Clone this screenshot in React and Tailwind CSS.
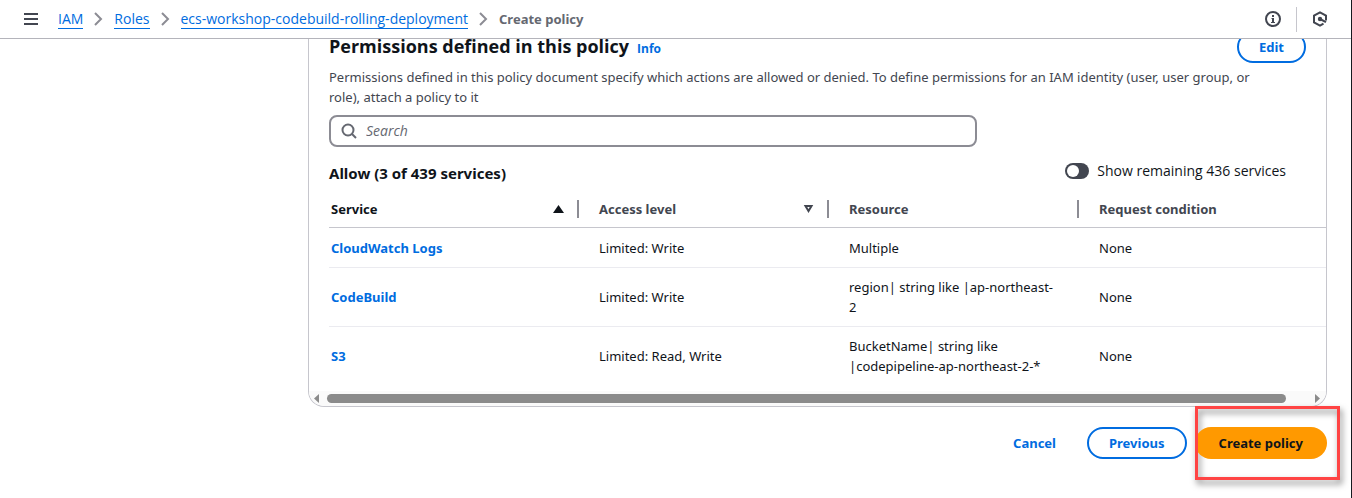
import React from "react";

const rows = [
  { service: "CloudWatch Logs", access: "Limited: Write", resource: "Multiple", condition: "None" },
  { service: "CodeBuild", access: "Limited: Write", resource: "region| string like |ap-northeast-2", condition: "None" },
  { service: "S3", access: "Limited: Read, Write", resource: "BucketName| string like |codepipeline-ap-northeast-2-*", condition: "None" },
];

// Body copy in the panel, and its bold form for headings, links and buttons.
const body = "font-['Noto_Sans','Open_Sans',sans-serif] text-[13px] leading-5";
const strong = `${body} font-bold`;

function Chevron() {
  return (
    <svg className="size-4 shrink-0" viewBox="0 0 16 16" fill="none" stroke="#8c8c94" strokeWidth="2" aria-hidden="true">
      <path d="M5 2l6 6-6 6" />
    </svg>
  );
}

function Crumb({ children }) {
  return (
    <li className="flex items-center gap-[7px]">
      <a href="#" className="border-b border-[#006ce0] leading-[18px] text-[#006ce0]">{children}</a>
      <Chevron />
    </li>
  );
}

function HeaderCell({ children, first, active, icon, divider = true }) {
  return (
    <th scope="col" className={`h-[38px] border-b border-[#c6c6cd] p-0 ${strong} ${active ? "text-[#0f141a]" : "text-[#424650]"}`}>
      <div className={`flex h-[18px] items-center justify-between ${first ? "pl-0.5" : "pl-5"} ${divider ? "border-r-2 border-[#8c8c94]" : ""}`}>
        <span>{children}</span>
        {icon && <button type="button" aria-label="Sort" className="mr-[13px]">{icon}</button>}
      </div>
    </th>
  );
}

function Cell({ children, first }) {
  return (
    <td className={`h-10 border-b border-[#ebebf0] py-[9px] pr-5 group-last:border-transparent ${body} ${first ? "pl-0.5" : "pl-5"}`}>
      {children}
    </td>
  );
}

export default function App() {
  return (
    <div className="flex min-h-screen flex-col overflow-hidden border-r border-[#16191f] bg-white font-['Open_Sans','Noto_Sans',sans-serif] text-sm leading-5 text-[#0f141a]">
      <header className="relative z-10 flex h-[39px] items-center border-b border-[#b4b4bb] bg-white pr-[23px] pl-[22px]">
        <button type="button" aria-label="Open navigation" className="mr-[18px]">
          <svg className="size-[18px]" viewBox="0 0 18 18" stroke="#424650" strokeWidth="2" aria-hidden="true">
            <path d="M2 4h14M2 9h14M2 14h14" />
          </svg>
        </button>
        <nav aria-label="Breadcrumbs" className="flex-1">
          <ol className="flex items-center gap-2">
            <Crumb>IAM</Crumb>
            <Crumb>Roles</Crumb>
            <Crumb>ecs-workshop-codebuild-rolling-deployment</Crumb>
            <li className={`${strong} text-[#656871]`} aria-current="page">Create policy</li>
          </ol>
        </nav>
        <button type="button" aria-label="Info panel" className="mr-[15px]">
          <svg className="size-4" viewBox="0 0 16 16" fill="none" stroke="#424650" strokeWidth="2" aria-hidden="true">
            <circle cx="8" cy="8" r="7" />
            <path d="M8 7v4.500M8 4v2" />
            <path d="M6.500 7.500H8M6 11.500h4" strokeWidth="1" />
          </svg>
        </button>
        <span className="h-[25px] w-px bg-[#c6c6cd]" />
        <button type="button" aria-label="Assistant" className="ml-[15px]">
          <svg className="size-4" viewBox="0 0 16 16" fill="none" stroke="#424650" strokeWidth="2" aria-hidden="true">
            <path d="M14 9.500V4.700L8 1.300 2 4.700v6.600l6 3.400 3.500-2" />
            <circle cx="8" cy="8" r="2.200" fill="#424650" stroke="none" />
            <path d="M8 8l6 3.200" />
          </svg>
        </button>
      </header>

      <main className="-mt-2 ml-[308px] mr-6">
        <section className="overflow-hidden rounded-b-2xl border border-t-0 border-[#c6c6cd]">
          <div className="pr-5 pl-5">
            <div className="flex items-start justify-between">
              <h2 className="flex items-baseline gap-2 pt-[3px] text-lg leading-6 font-bold">
                Permissions defined in this policy
                <a href="#" className="text-xs leading-4 text-[#006ce0]">Info</a>
              </h2>
              <button type="button" className={`h-8 rounded-full border-2 border-[#006ce0] px-5 text-[#006ce0] ${strong}`}>Edit</button>
            </div>
            <p className={`mt-1 pr-10 text-[#424650] ${body}`}>
              Permissions defined in this policy document specify which actions are allowed or denied. To define permissions for an IAM identity (user, user group, or role), attach a policy to it
            </p>
            <label className="mt-2 flex h-8 w-[calc(66%+3px)] items-center gap-[9px] rounded-lg border-2 border-[#8c8c94] px-[10px]">
              <svg className="size-4 shrink-0" viewBox="0 0 16 16" fill="none" stroke="#656871" strokeWidth="2" aria-hidden="true">
                <circle cx="7" cy="7" r="5.500" />
                <path d="M11 11l4 4" />
              </svg>
              <input type="search" aria-label="Search" placeholder="Search" className="min-w-0 flex-1 bg-transparent outline-none placeholder:text-[#656871] placeholder:italic" />
            </label>
            <div className="mt-[14px] flex items-start justify-between pr-5">
              <h3 className="pt-0.5 font-['Noto_Sans','Open_Sans',sans-serif] text-[15px] leading-5 font-bold">Allow (3 of 439 services)</h3>
              <label className="flex items-center gap-2">
                <input type="checkbox" role="switch" className="h-4 w-6 appearance-none rounded-full bg-[#424650] p-0.5 before:block before:size-3 before:rounded-full before:bg-white checked:before:ml-2" />
                Show remaining 436 services
              </label>
            </div>
          </div>
          <div className="mt-[7px] pl-5">
            <table className="w-full table-fixed border-separate border-spacing-0 text-left">
              <colgroup>
                <col className="w-[250px]" />
                <col className="w-[250px]" />
                <col className="w-[250px]" />
                <col />
              </colgroup>
              <thead>
                <tr>
                  <HeaderCell
                    first
                    active
                    icon={<svg className="h-2 w-[11px]" viewBox="0 0 11 8" fill="#0f141a" aria-hidden="true"><path d="M5.500 0L11 8H0z" /></svg>}
                  >
                    Service
                  </HeaderCell>
                  <HeaderCell
                    icon={<svg className="h-2 w-[11px]" viewBox="0 0 11 8" fill="none" stroke="#424650" strokeWidth="2" aria-hidden="true"><path d="M2.500 1h6L5.500 6z" /></svg>}
                  >
                    Access level
                  </HeaderCell>
                  <HeaderCell>Resource</HeaderCell>
                  <HeaderCell divider={false}>Request condition</HeaderCell>
                </tr>
              </thead>
              <tbody>
                {rows.map((row) => (
                  <tr key={row.service} className="group">
                    <Cell first>
                      <a href="#" className="font-bold text-[#006ce0]">{row.service}</a>
                    </Cell>
                    <Cell>{row.access}</Cell>
                    <Cell>{row.resource}</Cell>
                    <Cell>{row.condition}</Cell>
                  </tr>
                ))}
              </tbody>
            </table>
          </div>
          <div className="mt-[5px] flex h-[15px] items-center gap-2 bg-[#fafafa] pr-[6px] pl-[5px]">
            <svg className="h-[9px] w-[5px]" viewBox="0 0 5 9" fill="#8b8b8b" aria-hidden="true"><path d="M5 0v9L0 4.500z" /></svg>
            <div className="flex-1 pr-[21px]">
              <div className="h-[9px] rounded-full bg-[#8b8b8b]" />
            </div>
            <svg className="h-[9px] w-[5px]" viewBox="0 0 5 9" fill="#8b8b8b" aria-hidden="true"><path d="M0 0v9l5-4.500z" /></svg>
          </div>
        </section>

        <div className={`mt-5 flex items-center justify-end gap-2 ${strong}`}>
          <button type="button" className="h-8 px-[23px] text-[#006ce0]">Cancel</button>
          <button type="button" className="h-8 rounded-full border-2 border-[#006ce0] px-5 text-[#006ce0]">Previous</button>
          <div className="relative">
            <span className="pointer-events-none absolute -top-[21px] -right-[13px] -bottom-[21px] left-0 border-3 border-[#ff4444] drop-shadow-[2px_4px_3px_rgba(0,0,0,0.5)]" />
            <button type="button" className="relative h-8 rounded-full bg-[#ff9900] px-6">Create policy</button>
            <span className="pointer-events-none absolute -top-[21px] -right-[13px] -bottom-[21px] left-0 border-3 border-[#ff4444]" />
          </div>
        </div>
      </main>
    </div>
  );
}
